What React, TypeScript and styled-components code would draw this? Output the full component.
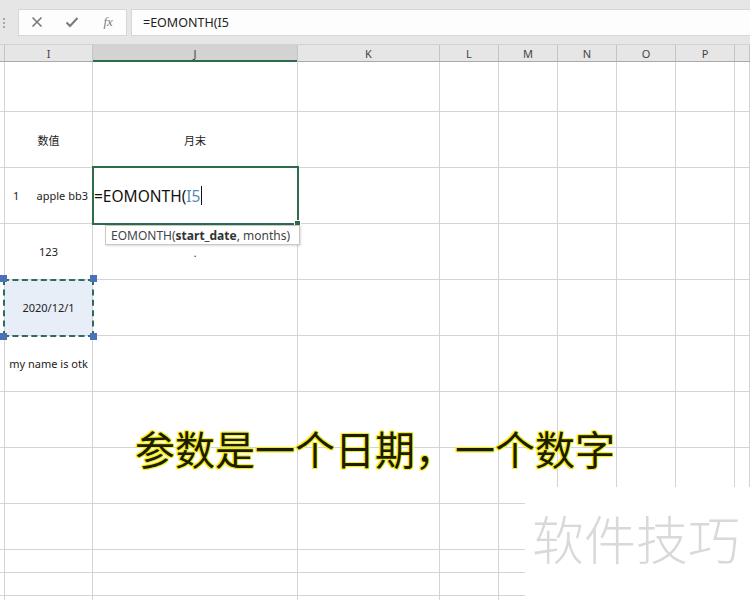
import { FC } from 'react';
import styled, { createGlobalStyle } from 'styled-components';

const GlobalStyle = createGlobalStyle`
  html, body {
    margin: 0;
    padding: 0;
    background: #ffffff;
    overflow: hidden;
  }
  body {
    font-family: 'Noto Sans', 'Noto Sans CJK SC', sans-serif;
  }
`;

const COLS = '5px 88px 205px 142px 59px 59px 59px 59px 59px 1fr';
const ROWS = [50, 56, 56, 56, 56, 56, 56, 56, 46, 23, 23, 20];
const LETTERS = ['', 'I', 'J', 'K', 'L', 'M', 'N', 'O', 'P', ''];

const Page = styled.div`
  position: relative;
  width: 750px;
  height: 600px;
  overflow: hidden;
  background: #fff;
`;

const Toolbar = styled.div`
  display: flex;
  align-items: center;
  gap: 4px;
  height: 45px;
  padding: 0 0 0 18px;
  background: #e6e6e6;
  border-bottom: 1px solid #d2d2d2;
  box-sizing: border-box;
  position: relative;
`;

const Grip = styled.div`
  position: absolute;
  left: 3px;
  top: 18px;
  width: 2px;
  height: 10px;
  background: repeating-linear-gradient(#a8a8a8 0 2px, transparent 2px 4px);
`;

const ButtonBox = styled.div`
  display: flex;
  align-items: center;
  justify-content: space-around;
  width: 109px;
  height: 27px;
  background: #fdfdfd;
  border: 1px solid #d6d6d6;
  box-sizing: border-box;
`;

const IconSlot = styled.span`
  display: flex;
  align-items: center;
  justify-content: center;
  width: 22px;
  color: #7a7a7a;
  font-family: 'Liberation Serif', serif;
  font-style: italic;
  font-size: 13px;
`;

const FormulaInput = styled.div`
  flex: 1;
  height: 27px;
  display: flex;
  align-items: center;
  padding-left: 11px;
  background: #fdfdfd;
  border: 1px solid #d6d6d6;
  border-right: none;
  box-sizing: border-box;
  font-size: 12.5px;
  color: #222;
`;

const HeaderRow = styled.div`
  display: grid;
  grid-template-columns: ${COLS};
  height: 17px;
  background: #e6e6e6;
  border-bottom: 1px solid #a9a9a9;
  box-sizing: border-box;
  width: 750px;
`;

const HeaderCell = styled.div<{ $active?: boolean }>`
  display: flex;
  align-items: center;
  justify-content: center;
  font-size: 11px;
  color: #444;
  border-right: 1px solid #c4c4c4;
  box-sizing: border-box;
  background: ${(p) => (p.$active ? '#d3d3d3' : 'transparent')};
  box-shadow: ${(p) => (p.$active ? 'inset 0 -2px 0 #2e6b4b' : 'none')};
  margin-bottom: ${(p) => (p.$active ? '-1px' : '0')};
`;

const Sheet = styled.div`
  display: grid;
  grid-template-columns: ${COLS};
  grid-template-rows: ${ROWS.map((r) => `${r}px`).join(' ')};
  width: 750px;
`;

const Cell = styled.div<{ $justify?: string }>`
  position: relative;
  display: flex;
  align-items: center;
  justify-content: ${(p) => p.$justify || 'center'};
  border-right: 1px solid #d4d4d4;
  border-bottom: 1px solid #d4d4d4;
  box-sizing: border-box;
  font-size: 11px;
  color: #222;
  white-space: nowrap;
`;

const SplitCell = styled(Cell)`
  justify-content: space-between;
  padding: 0 4px 0 8px;
`;

const EditCell = styled(Cell)`
  justify-content: flex-start;
  padding-left: 1px;
  z-index: 2;
  font-size: 15.5px;
  color: #111;

  &::after {
    content: '';
    position: absolute;
    left: -1px;
    top: -2px;
    right: -2px;
    bottom: -2px;
    border: 2px solid #2e6b4b;
  }
`;

const FillHandle = styled.span`
  position: absolute;
  right: -4px;
  bottom: -4px;
  width: 5px;
  height: 5px;
  background: #2e6b4b;
  border: 1px solid #fff;
  z-index: 3;
`;

const RefText = styled.span`
  color: #5b88b8;
`;

const Caret = styled.span`
  display: inline-block;
  width: 1px;
  height: 19px;
  background: #111;
  margin-left: 1px;
`;

const Tooltip = styled.div`
  position: absolute;
  left: 12px;
  top: calc(100% + 2px);
  width: 195px;
  height: 20px;
  display: flex;
  align-items: center;
  padding-left: 5px;
  box-sizing: border-box;
  background: #fff;
  border: 1px solid #c8c8c8;
  box-shadow: 1px 1px 2px rgba(0, 0, 0, 0.15);
  font-size: 12px;
  color: #444;
  z-index: 4;

  b {
    color: #333;
  }
`;

const SelectedCell = styled(Cell)`
  background: #e8eef8;
  z-index: 2;

  &::after {
    content: '';
    position: absolute;
    left: -2px;
    top: -1px;
    right: -2px;
    bottom: -2px;
    border: 2px dashed #2f6a63;
  }
`;

const Handle = styled.span<{ $x: 'left' | 'right'; $y: 'top' | 'bottom' }>`
  position: absolute;
  ${(p) => p.$x}: -5px;
  ${(p) => p.$y}: -5px;
  width: 7px;
  height: 7px;
  background: #4a72b6;
  z-index: 3;
`;

const Dot = styled.span`
  font-size: 10px;
  transform: translateY(1px);
`;

const Caption = styled.div`
  position: absolute;
  left: 135px;
  top: 423px;
  font-family: 'Noto Sans CJK SC', sans-serif;
  font-weight: 400;
  font-size: 40px;
  line-height: 50px;
  color: #1c1c00;
  text-shadow:
    -1px -1px 0 #f3ee1a, 1px -1px 0 #f3ee1a, -1px 1px 0 #f3ee1a, 1px 1px 0 #f3ee1a,
    0 0 2px #f6f07a;
`;

const Watermark = styled.div`
  position: absolute;
  right: 0;
  bottom: 0;
  width: 225px;
  height: 113px;
  background: #fff;
  display: flex;
  align-items: flex-start;
  padding: 20px 0 0 7px;
  box-sizing: border-box;
  font-family: 'Noto Sans CJK SC', sans-serif;
  font-weight: 300;
  font-size: 52px;
  line-height: 62px;
  color: #d9d9d9;
`;

const CrossIcon = () => (
  <svg width="12" height="12" viewBox="0 0 12 12">
    <path d="M1.5 1.5 L10.5 10.5 M10.5 1.5 L1.5 10.5" stroke="#7a7a7a" strokeWidth="1.6" />
  </svg>
);

const CheckIcon = () => (
  <svg width="14" height="12" viewBox="0 0 14 12">
    <path d="M1.5 6.5 L5 10 L12.5 2" stroke="#7a7a7a" strokeWidth="2" fill="none" />
  </svg>
);

type CellContent = { i?: string; j?: string };

const DATA: CellContent[] = [
  {},
  { i: '数值', j: '月末' },
  { i: 'split', j: 'edit' },
  { i: '123', j: 'dot' },
  { i: 'selected' },
  { i: 'my name is otk' },
  {},
  {},
  {},
  {},
  {},
  {},
];

const renderI = (v?: string) => {
  if (v === 'split') {
    return (
      <SplitCell>
        <span>1</span>
        <span>apple bb3</span>
      </SplitCell>
    );
  }
  if (v === 'selected') {
    return (
      <SelectedCell>
        2020/12/1
        <Handle $x="left" $y="top" />
        <Handle $x="right" $y="top" />
        <Handle $x="left" $y="bottom" />
        <Handle $x="right" $y="bottom" />
      </SelectedCell>
    );
  }
  return <Cell>{v}</Cell>;
};

const renderJ = (v?: string) => {
  if (v === 'edit') {
    return (
      <EditCell>
        =EOMONTH(<RefText>I5</RefText>
        <Caret />
        <FillHandle />
        <Tooltip>
          EOMONTH(<b>start_date</b>, months)
        </Tooltip>
      </EditCell>
    );
  }
  if (v === 'dot') {
    return (
      <Cell>
        <Dot>.</Dot>
      </Cell>
    );
  }
  return <Cell>{v}</Cell>;
};

const App: FC = () => (
  <Page>
    <GlobalStyle />
    <Toolbar>
      <Grip />
      <ButtonBox>
        <IconSlot>
          <CrossIcon />
        </IconSlot>
        <IconSlot>
          <CheckIcon />
        </IconSlot>
        <IconSlot>fx</IconSlot>
      </ButtonBox>
      <FormulaInput>=EOMONTH(I5</FormulaInput>
    </Toolbar>
    <HeaderRow>
      {LETTERS.map((l, idx) => (
        <HeaderCell key={idx} $active={l === 'J'}>
          {l}
        </HeaderCell>
      ))}
    </HeaderRow>
    <Sheet>
      {DATA.map((row, r) => [
        <Cell key={`s${r}`} />,
        <span key={`i${r}`} style={{ display: 'contents' }}>
          {renderI(row.i)}
        </span>,
        <span key={`j${r}`} style={{ display: 'contents' }}>
          {renderJ(row.j)}
        </span>,
        ...[0, 1, 2, 3, 4, 5, 6].map((c) => <Cell key={`c${r}-${c}`} />),
      ])}
    </Sheet>
    <Caption>参数是一个日期，一个数字</Caption>
    <Watermark>软件技巧</Watermark>
  </Page>
);

export default App;
